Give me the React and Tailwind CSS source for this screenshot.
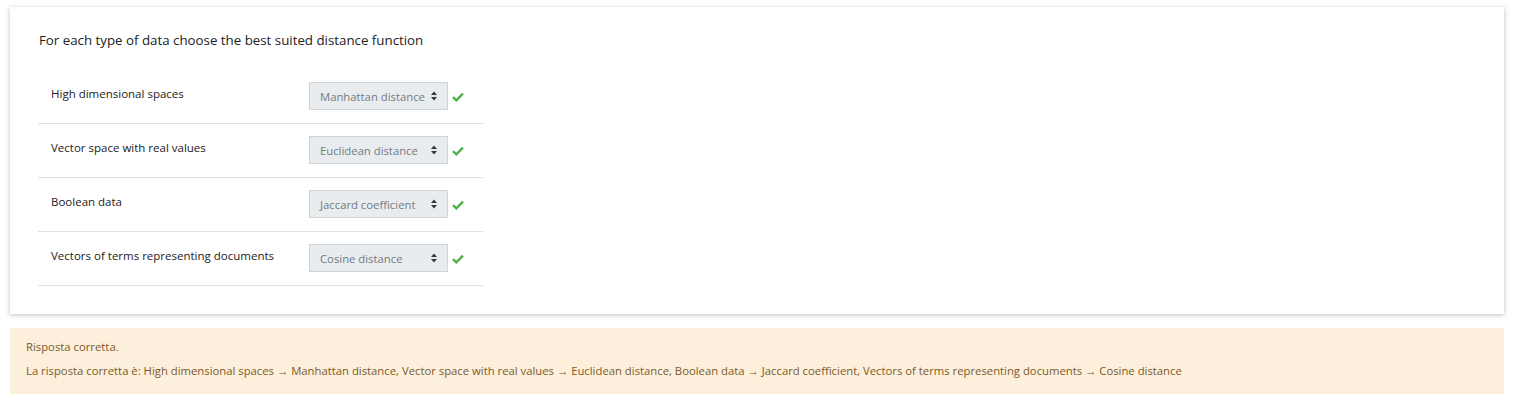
import React from "react";

const rows = [
  ["High dimensional spaces", "Manhattan distance"],
  ["Vector space with real values", "Euclidean distance"],
  ["Boolean data", "Jaccard coefficient"],
  ["Vectors of terms representing documents", "Cosine distance"],
];

function Check() {
  return (
    <svg width="12" height="10" viewBox="0 0 12 10" className="ml-[4px] mt-[2px]">
      <path d="M1 5.2 L4.3 8.3 L11 1.6" fill="none" stroke="#4fb04a" strokeWidth="2.4" strokeLinejoin="miter" />
    </svg>
  );
}

function Caret() {
  return (
    <svg width="6" height="10" viewBox="0 0 6 10" className="absolute right-[10px] top-[8px]">
      <path d="M0 4 L3 0.5 L6 4 Z" fill="#343a40" />
      <path d="M0 6 L3 9.5 L6 6 Z" fill="#343a40" />
    </svg>
  );
}

export default function App() {
  return (
    <div className="bg-white w-[1514px] h-[405px] pt-[7px] px-[10px]" style={{ fontFamily: '"Open Sans", "Noto Sans", sans-serif' }}>
      <div className="bg-white shadow-[0_1px_5px_rgba(0,0,0,0.25)] h-[307px] pl-[28px] pt-[23px]">
        <div className="text-[13.3px] text-[#1d2125] leading-[20px] pl-[1px]">
          For each type of data choose the best suited distance function
        </div>
        <div className="mt-[20px] w-[445px]">
          {rows.map(([label, val]) => (
            <div key={label} className="flex border-b border-[#dee2e6] h-[54px] pt-[12px]">
              <div className="w-[271px] pl-[13px] pt-[2px] text-[11.5px] text-[#1d2125] leading-[19px]">{label}</div>
              <div className="flex items-start">
                <div className="relative w-[139px] h-[28px] bg-[#e9ecef] border border-[#ced4da] pl-[10px] text-[11.3px] text-[#737b83] leading-[27px]">
                  {val}
                  <Caret />
                </div>
                <div className="h-[28px] flex items-center">
                  <Check />
                </div>
              </div>
            </div>
          ))}
        </div>
      </div>
      <div className="mt-[14px] h-[66px] bg-[#fcefdc] pl-[16px] pt-[9px] text-[11.3px] text-[#7d5a29]">
        <div className="leading-[20px]">Risposta corretta.</div>
        <div className="leading-[20px] mt-[4px]">
          La risposta corretta è: High dimensional spaces → Manhattan distance, Vector space with real values → Euclidean distance, Boolean data → Jaccard coefficient, Vectors of terms representing documents → Cosine distance
        </div>
      </div>
    </div>
  );
}
